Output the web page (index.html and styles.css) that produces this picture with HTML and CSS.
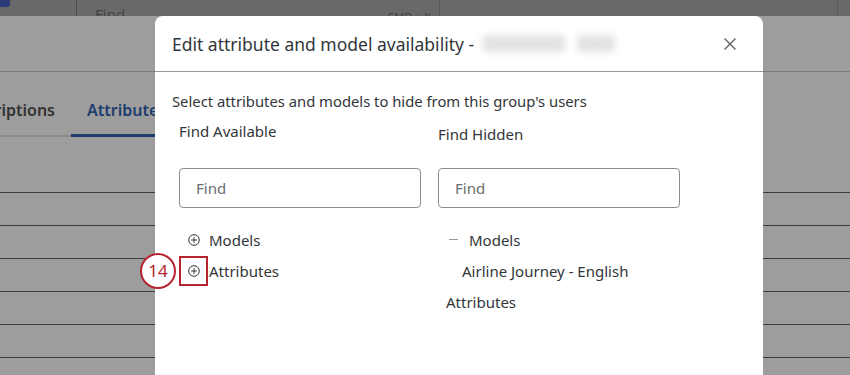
FILE: index.html
```html
<!DOCTYPE html>
<html>
<head>
<meta charset="utf-8">
<link rel="stylesheet" href="styles.css">
</head>
<body>
<div class="page">
  <div class="topbar">
    <div class="logo-cell"><span class="logo-mark"></span></div>
    <div class="search-cell"><span class="search-text">Find</span><span class="shortcut">CMD + K</span></div>
    <div class="tail-cell"></div>
    <div class="end-cell"></div>
  </div>
  <div class="subheader"></div>
  <div class="tabs">
    <div class="tab first"><span class="tab-label">Subscriptions</span></div>
    <div class="tab active"><span class="tab-label">Attributes</span></div>
  </div>
  <div class="rows">
    <div class="row"></div>
    <div class="row"></div>
    <div class="row"></div>
    <div class="row"></div>
    <div class="row"></div>
    <div class="row"></div>
    <div class="row"></div>
  </div>

  <div class="modal">
    <div class="modal-header">
      <div class="modal-title">Edit attribute and model availability - <span class="blur"><span class="b1"></span><span class="b2"></span></span></div>
      <button class="close" aria-label="Close">
        <svg width="14" height="14" viewBox="0 0 14 14"><path d="M1.5 1.5L12.5 12.5M12.5 1.5L1.5 12.5" stroke="#5a5d61" stroke-width="1.3" fill="none"/></svg>
      </button>
    </div>
    <div class="modal-body">
      <p class="desc">Select attributes and models to hide from this group's users</p>
      <div class="columns">
        <div class="col">
          <div class="col-label">Find Available</div>
          <div class="input"><span>Find</span></div>
          <ul class="tree">
            <li class="node">
              <span class="toggle">
                <svg width="12" height="12" viewBox="0 0 12 12"><circle cx="6" cy="6" r="5.3" fill="none" stroke="#32363a" stroke-width="1"/><path d="M6 3.2V8.8M3.2 6H8.8" stroke="#32363a" stroke-width="1"/></svg>
              </span>Models
            </li>
            <li class="node">
              <span class="toggle highlight">
                <svg width="12" height="12" viewBox="0 0 12 12"><circle cx="6" cy="6" r="5.3" fill="none" stroke="#32363a" stroke-width="1"/><path d="M6 3.2V8.8M3.2 6H8.8" stroke="#32363a" stroke-width="1"/></svg>
                <span class="badge">14</span>
              </span>Attributes
            </li>
          </ul>
        </div>
        <div class="col right">
          <div class="col-label">Find Hidden</div>
          <div class="input"><span>Find</span></div>
          <ul class="tree">
            <li class="node"><span class="dash"></span>Models</li>
            <li class="node child">Airline Journey - English</li>
            <li class="node plain">Attributes</li>
          </ul>
        </div>
      </div>
    </div>
  </div>
</div>
</body>
</html>
```
FILE: styles.css
```css
* { box-sizing: border-box; }
html, body { margin: 0; padding: 0; }
body {
  width: 850px;
  height: 375px;
  overflow: hidden;
  background: #9d9d9d;
  font-family: "Noto Sans", "Lato", sans-serif;
  color: #32363a;
}
.page { position: relative; width: 850px; height: 375px; overflow: hidden; }

.topbar {
  display: flex;
  height: 16px;
  background: #696969;
  overflow: hidden;
}
.logo-cell { width: 77px; border-right: 1px solid #4e4e4e; }
.logo-mark {
  display: block;
  width: 10px; height: 7px;
  background: #2c3a78;
  border-radius: 0 0 3px 0;
}
.search-cell {
  width: 363px;
  border-right: 1px solid #575757;
  display: flex;
  justify-content: space-between;
  align-items: flex-start;
  padding: 7px 8px 0 18px;
  font-size: 15px;
  line-height: 15px;
  color: #444;
  overflow: hidden;
}
.shortcut { font-size: 11px; line-height: 11px; padding-top: 4px; }
.tail-cell { width: 398px; border-right: 1px solid #575757; }
.end-cell { flex: 1; }

.subheader { height: 56px; border-bottom: 1px solid #7b7b7b; }

.tabs {
  display: flex;
  height: 65px;
  align-items: stretch;
}
.tab {
  font-size: 16px;
  font-weight: 600;
  color: #333;
  display: flex;
  align-items: center;
  padding-top: 13px;
  border-bottom: 2px solid #8a8a8a;
  white-space: nowrap;
  overflow: hidden;
}
.tab-label { flex-shrink: 0; }
.tab.first { width: 71px; justify-content: flex-end; padding-right: 16px; }
.tab.active {
  color: #1e3d6f;
  border-bottom: 3px solid #1e3d6f;
  padding: 13px 16px 0 16px;
  width: 120px;
}

.rows { padding-top: 55px; }
.row { height: 33px; border-top: 1px solid #3c3c3c; }

.modal {
  position: absolute;
  left: 155px;
  top: 16px;
  width: 608px;
  height: 380px;
  background: #fff;
  border-radius: 8px 8px 0 0;
}
.modal-header {
  height: 56px;
  border-bottom: 1px solid #999;
  display: flex;
  align-items: center;
  justify-content: space-between;
  padding: 0 26px 0 17px;
}
.modal-title { font-size: 17.5px; color: #32363a; display: flex; align-items: center; white-space: pre; }
.blur { display: inline-flex; gap: 12px; margin-left: 4px; filter: blur(3.5px); }
.blur .b1 { width: 82px; height: 17px; background: #e2e2e2; border-radius: 4px; }
.blur .b2 { width: 38px; height: 17px; background: #e2e2e2; border-radius: 4px; }
.close { background: none; border: 0; padding: 0; width: 14px; height: 14px; display: flex; }

.modal-body { padding: 18px 17px 0 17px; }
.desc { margin: 0; font-size: 14.8px; line-height: 22px; }
.columns { display: flex; gap: 17px; padding-left: 7px; }
.col { width: 242px; }
.col-label { font-size: 15px; line-height: 20px; margin-top: 9px; }
.col.right .col-label { margin-top: 12px; }
.input {
  margin-top: 27px;
  height: 40px;
  border: 1px solid #8c8c8c;
  border-radius: 4px;
  display: flex;
  align-items: center;
  padding-left: 16px;
  font-size: 15px;
  color: #6a6d70;
}
.col.right .input { margin-top: 24px; }
.tree { list-style: none; margin: 16px 0 0 0; padding: 0; }
.node { height: 31px; display: flex; align-items: center; font-size: 15px; white-space: nowrap; }
.toggle {
  position: relative;
  width: 29px;
  height: 30px;
  display: flex;
  align-items: center;
  justify-content: center;
  margin-right: 1px;
}
.toggle.highlight { border: 2px solid #b5242f; }
.badge {
  position: absolute;
  left: -41px;
  top: -5px;
  width: 36px;
  height: 36px;
  border-radius: 50%;
  border: 2.5px solid #b5242f;
  background: #fff;
  color: #b5242f;
  font-size: 17px;
  display: flex;
  align-items: center;
  justify-content: center;
}
.dash { display: inline-block; width: 9px; height: 1px; background: #9a9a9a; margin: 0 11px 0 11px; }
.child { padding-left: 24px; }
.plain { padding-left: 8px; }
```
